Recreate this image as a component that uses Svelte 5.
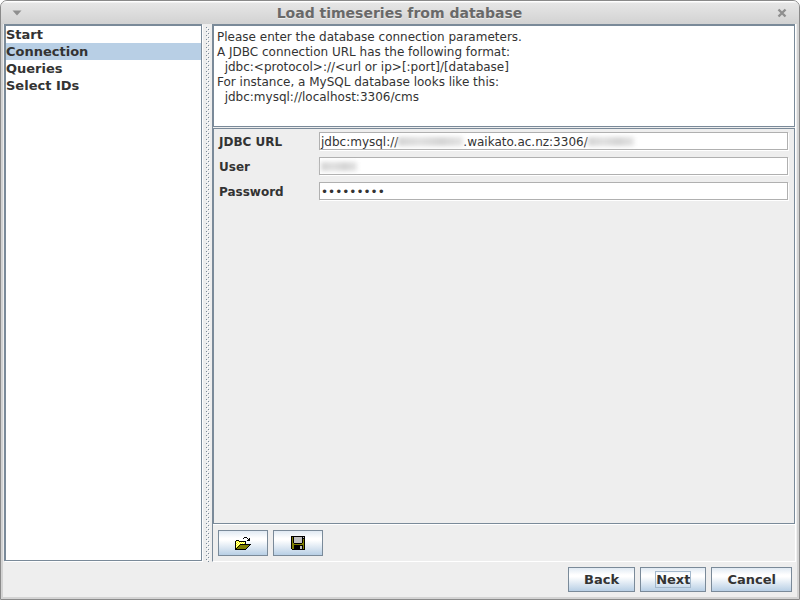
<script>
  const steps = ['Start', 'Connection', 'Queries', 'Select IDs'];
  let current = $state('Connection');
  let password = $state('•••••••••');

  const folder = [
    '.........###....',
    '........#...#.#.',
    '.............##.',
    '.###........###.',
    '#ywy#######.....',
    '#wywywywyw#.....',
    '#ywywywywy#.....',
    '#wywy###########',
    '#ywy#ooooooooo#.',
    '#wy#ooooooooo#..',
    '#y#ooooooooo#...',
    '##ooooooooo#....',
    '###########.....'
  ];
  const disk = [
    '##############',
    '#o#gggggggg#g#',
    '#o#gggggggg###',
    '#o#gggggggg#o#',
    '#o#gggggggg#o#',
    '#o#gggggggg#o#',
    '#o#gggggggg#o#',
    '#oo########oo#',
    '#oooooooooooo#',
    '#oo#########o#',
    '#oo######gg#o#',
    '#oo######gg#o#',
    '#oo######gg#o#',
    '.#############'
  ];
  const ink = { '#': '#000', y: '#ffff00', w: '#ffffc0', o: '#808000', g: '#c0c0c0' };
</script>

{#snippet pixels(rows)}
  <svg width={rows[0].length} height={rows.length} shape-rendering="crispEdges" aria-hidden="true">
    {#each rows as row, y}
      {#each row.split('') as c, x}
        {#if c !== '.'}<rect {x} {y} width="1" height="1" fill={ink[c]} />{/if}
      {/each}
    {/each}
  </svg>
{/snippet}

<div class="window">
  <header>
    <button class="chrome" aria-label="Window menu">
      <svg width="10" height="6"><path d="M0.5 0.5h9L5 5.5z" fill="#8f8f8f" /></svg>
    </button>
    <h1>Load timeseries from database</h1>
    <button class="chrome" aria-label="Close">
      <svg width="10" height="10"><path d="M1.5 1.5l7 7M8.5 1.5l-7 7" stroke="#8f8f8f" stroke-width="2.4" /></svg>
    </button>
  </header>

  <main>
    <nav>
      {#each steps as step}
        <button class:selected={step === current} onclick={() => (current = step)}>{step}</button>
      {/each}
    </nav>
    <div class="divider">
      <svg width="4" height="100%" aria-hidden="true">
        <defs>
          <pattern id="grip" width="4" height="4" patternUnits="userSpaceOnUse">
            <path d="M0 0h1v1h-1zM2 2h1v1h-1z" fill="#7a8a99" />
            <path d="M1 1h1v1h-1zM3 3h1v1h-1z" fill="#fff" />
          </pattern>
        </defs>
        <rect width="4" height="100%" fill="url(#grip)" shape-rendering="crispEdges" />
      </svg>
    </div>
    <section class="page">
      <div class="help">Please enter the database connection parameters.
A JDBC connection URL has the following format:
  jdbc:&lt;protocol&gt;://&lt;url or ip&gt;[:port]/[database]
For instance, a MySQL database looks like this:
  jdbc:mysql://localhost:3306/cms</div>
      <form id="connection">
        <label for="url">JDBC URL</label>
        <div class="field">
          <span>jdbc:mysql://</span><i class="smudge host"></i><span>.waikato.ac.nz:3306/</span><i class="smudge name"></i>
          <input id="url" type="text" />
        </div>
        <label for="user">User</label>
        <div class="field">
          <i class="smudge user"></i>
          <input id="user" type="text" />
        </div>
        <label for="password">Password</label>
        <div class="field">
          <input id="password" type="text" bind:value={password} />
        </div>
      </form>
      <div class="tools">
        <button class="push" aria-label="Open">{@render pixels(folder)}</button>
        <button class="push" aria-label="Save">{@render pixels(disk)}</button>
      </div>
    </section>
  </main>

  <footer>
    <button class="push">Back</button>
    <button class="push"><span class="focus">Next</span></button>
    <button class="push">Cancel</button>
  </footer>
</div>

<style>
  :global(body) {
    background: #fff;
  }
  .window {
    box-sizing: border-box;
    height: 100vh;
    display: flex;
    flex-direction: column;
    border: 1px solid #8a8a8a;
    border-radius: 7px 7px 0 0;
    background: #eee;
    box-shadow: inset 0 0 0 2px #d3d3d3;
    font: 13px/15px "DejaVu Sans", sans-serif;
    color: #333;
    overflow: hidden;
  }
  button {
    font: inherit;
    color: inherit;
    padding: 0;
    margin: 0;
    border: 0;
    background: none;
  }
  svg {
    display: block;
  }
  header {
    height: 23px;
    flex: none;
    display: flex;
    align-items: center;
    padding: 0 12px 0 11px;
    background: linear-gradient(#fff 0, #fff 1px, #e6e6e6 2px, #d2d2d2);
  }
  h1 {
    flex: 1;
    margin: 0;
    font-size: 14px;
    line-height: 22px;
    text-align: center;
    color: #696969;
    text-shadow: 0 1px #eee;
  }
  main {
    flex: 1;
    min-height: 0;
    display: flex;
    padding: 0 3px 0 3px;
  }
  nav {
    box-sizing: border-box;
    width: 198px;
    flex: none;
    display: flex;
    flex-direction: column;
    margin-bottom: 1px;
    background: #fff;
    border: 1px solid #7a8a99;
    border-width: 2px 1px 1px 2px;
    box-shadow: 1px 1px #fff;
  }
  nav button {
    height: 17px;
    flex: none;
    text-align: left;
    font-weight: bold;
    line-height: 17px;
  }
  nav .selected {
    background: #b8cfe5;
  }
  .divider {
    width: 10px;
    flex: none;
    box-sizing: border-box;
    padding: 3px 0 0 4px;
  }
  .page {
    flex: 1;
    min-width: 0;
    display: flex;
    flex-direction: column;
    border-left: 1px solid #7a8a99;
    border-right: 1px solid #fff;
    border-bottom: 1px solid #fff;
  }
  .help {
    box-sizing: border-box;
    height: 103px;
    flex: none;
    padding: 4px 3px;
    background: #fff;
    border: 1px solid #7a8a99;
    border-top-width: 2px;
    white-space: pre-wrap;
    font-size: 12px;
    line-height: 15px;
  }
  form {
    flex: 1;
    margin-top: 1px;
    display: grid;
    grid-template-columns: 94px 1fr;
    grid-auto-rows: 18px;
    row-gap: 7px;
    column-gap: 6px;
    padding: 3px 6px 0 5px;
    border: 1px solid #7a8a99;
  }
  label {
    font-weight: bold;
    font-size: 12px;
    line-height: 20px;
  }
  .field {
    position: relative;
    box-sizing: border-box;
    display: flex;
    align-items: center;
    padding-left: 1px;
    border: 1px solid #b0b0b0;
    background: #fff;
    box-shadow: 1px 1px #fff;
    font-size: 12px;
    line-height: 16px;
    white-space: nowrap;
  }
  .field span {
    padding-top: 1px;
  }
  input {
    position: absolute;
    inset: 0;
    width: 100%;
    box-sizing: border-box;
    padding: 1px 1px 0;
    border: 0;
    outline: 0;
    background: none;
    font: inherit;
    color: inherit;
  }
  .smudge {
    height: 9px;
    filter: blur(2px);
    background: linear-gradient(90deg, #d4d4d4, #e0e0e0, #d4d4d4, #e4e4e4);
  }
  .host {
    width: 65px;
  }
  .name {
    width: 46px;
  }
  .user {
    width: 36px;
  }
  .tools {
    flex: none;
    display: flex;
    gap: 5px;
    padding: 5px;
    border-top: 1px solid #fff;
  }
  .push {
    box-sizing: border-box;
    height: 25px;
    padding: 0 15px;
    border: 1px solid #7a8a99;
    background: linear-gradient(#e1eaf3 0, #fff 30%, #fff 38%, #b8cfe5);
    font-weight: bold;
  }
  .tools .push {
    width: 50px;
    height: 26px;
    padding: 0;
    display: grid;
    place-items: center;
  }
  footer {
    flex: none;
    display: flex;
    justify-content: flex-end;
    gap: 5px;
    padding: 5px 7px 7px;
  }
  .focus {
    outline: 1px solid #a3b8cc;
  }
</style>
